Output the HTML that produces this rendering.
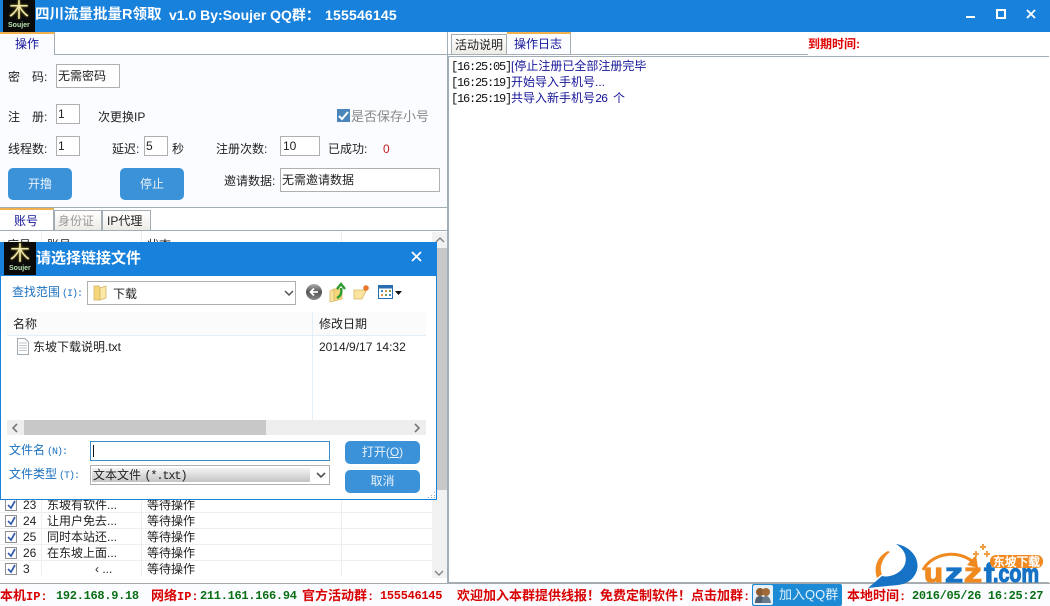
<!DOCTYPE html>
<html><head><meta charset="utf-8">
<style>
html,body{margin:0;padding:0;background:#fff}
#r{position:relative;width:1050px;height:606px;overflow:hidden;background:#fff;font:12px/14px "Liberation Sans","WenQuanYi Zen Hei","Noto Sans CJK SC",sans-serif;color:#222}
#r div,#r svg{position:absolute}
.t{white-space:nowrap}
.m{font-family:"Liberation Mono",monospace;font-size:12px;letter-spacing:-1.2px}
.l{font-family:"Liberation Mono",monospace;font-size:10px;letter-spacing:-1px;margin-left:2px}
.inp{box-sizing:border-box;background:#fff;border:1px solid #b0b0b0;padding:2px 1px;white-space:nowrap;line-height:14px}
.btn{background:#3c92d8;color:#e8f2fb;border-radius:5px;text-align:center;white-space:nowrap}
.cb{width:10px;height:10px;border:1px solid #8f8f8f;background:#fff;left:5px}
.ln{height:1px;background:#eee;left:0;width:432px}
.r{color:#d80000;font-weight:bold;white-space:nowrap;font-size:13px}
.r .q{font-family:"Liberation Mono",monospace;font-size:12px}
.g{color:#0a6e14;font-weight:bold;white-space:nowrap;font-family:"Liberation Mono",monospace;letter-spacing:-.3px}
.logo{color:#efe8b0;font-size:20px;line-height:22px;text-shadow:0 0 2px #c8b030}
.sj{font-size:7px;line-height:8px;color:#b8e0b0;font-weight:bold}
</style></head><body><div id="r">
<!-- title bar -->
<div style="left:0;top:0;width:1050px;height:32px;background:#1881dc"></div>
<div style="left:3px;top:0;width:32px;height:32px;background:#0a0a0a"></div>
<div class="t logo" style="left:9px;top:0">木</div>
<div class="t sj" style="left:8px;top:22px">Soujer</div>
<div class="t" style="left:35px;top:6px;color:#fff;font-size:14.5px;line-height:18px;font-weight:bold">四川流量批量R领取</div>
<div class="t" style="left:169px;top:6px;color:#fff;font-size:14px;line-height:18px;font-weight:bold">v1.0 By:Soujer QQ群：</div>
<div class="t" style="left:325px;top:6px;color:#fff;font-size:14px;line-height:18px;font-weight:bold;letter-spacing:.2px">155546145</div>
<div style="left:966px;top:16px;width:9px;height:2px;background:#fff"></div>
<div style="left:996px;top:9px;width:6px;height:6px;border:2px solid #fff"></div>
<svg style="left:1026px;top:9px" width="10" height="10"><path d="M1 1L9 9M9 1L1 9" stroke="#fff" stroke-width="1.8"/></svg>

<!-- left top panel -->
<div style="left:0;top:54px;width:448px;height:154px;background:#fbfcff;border-top:1px solid #a3adb5;border-right:1px solid #a3adb5;border-bottom:1px solid #a3adb5;box-sizing:border-box"></div>
<div style="left:0;top:32px;width:55px;height:23px;background:#fbfcff;border-right:1px solid #a3adb5;border-top:2px solid #f0b050;box-sizing:border-box"></div>
<div class="t" style="left:15px;top:37px;color:#16169a">操作</div>
<div class="t" style="left:8px;top:70px">密</div><div class="t" style="left:32px;top:70px">码:</div>
<div class="inp" style="left:56px;top:64px;width:64px;height:24px;padding-top:4px">无需密码</div>
<div class="t" style="left:8px;top:110px">注</div><div class="t" style="left:32px;top:110px">册:</div>
<div class="inp" style="left:56px;top:104px;width:24px;height:20px">1</div>
<div class="t" style="left:98px;top:110px">次更换IP</div>
<div style="left:337px;top:109px;width:13px;height:13px;background:#4a86bc"></div>
<svg style="left:337px;top:109px" width="13" height="13"><path d="M2 7L5 10L11 3" fill="none" stroke="#fff" stroke-width="2"/></svg>
<div class="t" style="left:351px;top:110px;color:#888;font-size:13px">是否保存小号</div>
<div class="t" style="left:8px;top:142px">线程数:</div>
<div class="inp" style="left:56px;top:136px;width:24px;height:20px">1</div>
<div class="t" style="left:112px;top:142px">延迟:</div>
<div class="inp" style="left:144px;top:136px;width:24px;height:20px">5</div>
<div class="t" style="left:172px;top:142px">秒</div>
<div class="t" style="left:216px;top:142px">注册次数:</div>
<div class="inp" style="left:280px;top:136px;width:40px;height:20px;padding-left:2px">10</div>
<div class="t" style="left:328px;top:142px">已成功:</div>
<div class="t" style="left:383px;top:142px;color:#c02020">0</div>
<div class="btn" style="left:8px;top:168px;width:64px;height:32px;line-height:32px">开撸</div>
<div class="btn" style="left:120px;top:168px;width:64px;height:32px;line-height:32px">停止</div>
<div class="t" style="left:224px;top:174px">邀请数据:</div>
<div class="inp" style="left:280px;top:168px;width:160px;height:24px;padding-top:4px">无需邀请数据</div>

<!-- left lower tabs -->
<div style="left:0;top:208px;width:54px;height:23px;background:#fff;border-top:2px solid #f0b050;border-right:1px solid #a3adb5;box-sizing:border-box"></div>
<div class="t" style="left:14px;top:214px;color:#16169a">账号</div>
<div style="left:54px;top:210px;width:46px;height:20px;background:linear-gradient(#fff,#eceae4);border:1px solid #a3adb5;border-bottom:0"></div>
<div class="t" style="left:58px;top:214px;color:#999">身份证</div>
<div style="left:102px;top:210px;width:47px;height:20px;background:linear-gradient(#fff,#eceae4);border:1px solid #a3adb5;border-bottom:0"></div>
<div class="t" style="left:107px;top:214px">IP代理</div>
<div style="left:0;top:230px;width:448px;height:1px;background:#a3adb5"></div>
<div style="left:447px;top:32px;width:1px;height:552px;background:#a3adb5"></div>

<!-- table -->
<div class="t" style="left:7px;top:238px">序号</div>
<div class="t" style="left:47px;top:238px">账号</div>
<div class="t" style="left:147px;top:238px">状态</div>
<div style="left:41px;top:231px;width:1px;height:345px;background:#eee"></div>
<div style="left:141px;top:231px;width:1px;height:345px;background:#eee"></div>
<div style="left:341px;top:231px;width:1px;height:345px;background:#eee"></div>
<div style="left:432px;top:232px;width:15px;height:346px;background:#f2f2f2"></div>
<div style="left:432px;top:248px;width:15px;height:242px;background:#c8c8c8"></div>
<svg style="left:435px;top:236px" width="10" height="8"><path d="M1 6L5 2L9 6" fill="none" stroke="#888" stroke-width="1.5"/></svg>
<div class="ln" style="top:512px"></div><div class="ln" style="top:528px"></div><div class="ln" style="top:544px"></div><div class="ln" style="top:560px"></div>
<div class="cb" style="top:499px"></div><div class="cb" style="top:515px"></div><div class="cb" style="top:531px"></div><div class="cb" style="top:547px"></div><div class="cb" style="top:563px"></div>
<svg style="left:5px;top:499px" width="13" height="80"><g fill="none" stroke="#3a5fb0" stroke-width="1.8"><path d="M3 6L6 9L10 2"/><path d="M3 22L6 25L10 18"/><path d="M3 38L6 41L10 34"/><path d="M3 54L6 57L10 50"/><path d="M3 70L6 73L10 66"/></g></svg>
<div class="t" style="left:23px;top:498px">23</div><div class="t" style="left:47px;top:498px">东坡有软件...</div><div class="t" style="left:147px;top:498px">等待操作</div>
<div class="t" style="left:23px;top:514px">24</div><div class="t" style="left:47px;top:514px">让用户免去...</div><div class="t" style="left:147px;top:514px">等待操作</div>
<div class="t" style="left:23px;top:530px">25</div><div class="t" style="left:47px;top:530px">同时本站还...</div><div class="t" style="left:147px;top:530px">等待操作</div>
<div class="t" style="left:23px;top:546px">26</div><div class="t" style="left:47px;top:546px">在东坡上面...</div><div class="t" style="left:147px;top:546px">等待操作</div>
<div class="t" style="left:23px;top:562px">3</div><div class="t" style="left:95px;top:562px">‹ ...</div><div class="t" style="left:147px;top:562px">等待操作</div>
<svg style="left:434px;top:570px" width="10" height="8"><path d="M1 1L5 5L9 1" fill="none" stroke="#888" stroke-width="1.5"/></svg>

<!-- right tabs -->
<div style="left:451px;top:34px;width:56px;height:21px;background:linear-gradient(#fff,#eceae4);border:1px solid #a3adb5;border-bottom:0;box-sizing:border-box"></div>
<div class="t" style="left:455px;top:38px">活动说明</div>
<div style="left:507px;top:32px;width:64px;height:23px;background:#fbfcff;border-top:2px solid #f0b050;border-right:1px solid #a3adb5;box-sizing:border-box"></div>
<div class="t" style="left:514px;top:37px;color:#16169a">操作日志</div>
<div style="left:448px;top:54px;width:360px;height:1px;background:#a3adb5"></div>
<div class="t" style="left:808px;top:37px;color:#e00000;font-weight:bold">到期时间:</div>
<div style="left:448px;top:56px;width:601px;height:527px;border:1px solid #a3adb5;border-right:0;box-sizing:border-box"></div>
<div class="t" style="left:451px;top:59px"><span class="m" style="color:#111">[16:25:05]</span><span style="color:#16169a">[停止注册已全部注册完毕</span></div>
<div class="t" style="left:451px;top:75px"><span class="m" style="color:#111">[16:25:19]</span><span style="color:#16169a">开始导入手机号...</span></div>
<div class="t" style="left:451px;top:91px"><span class="m" style="color:#111">[16:25:19]</span><span style="color:#16169a">共导入新手机号<span class="m">26 </span>个</span></div>

<!-- dialog -->
<div style="left:0;top:242px;width:437px;height:258px;background:#fff;border:1px solid #1881dc;box-sizing:border-box"></div>
<div style="left:0;top:242px;width:437px;height:34px;background:#1881dc"></div>
<div style="left:4px;top:242px;width:32px;height:33px;background:#0a0a0a"></div>
<div class="t logo" style="left:10px;top:243px">木</div>
<div class="t sj" style="left:9px;top:265px">Soujer</div>
<div class="t" style="left:36px;top:250px;color:#fff;font-size:15px;line-height:18px;font-weight:bold">请选择链接文件</div>
<svg style="left:411px;top:251px" width="11" height="11"><path d="M1 1L10 10M10 1L1 10" stroke="#fff" stroke-width="1.8"/></svg>
<div class="t" style="left:12px;top:285px;color:#1a70c0">查找范围<span class="l">(I):</span></div>
<div class="inp" style="left:87px;top:281px;width:209px;height:24px"></div>
<svg style="left:93px;top:284px" width="15" height="18"><path d="M1 2H6L7 4V16H1Z" fill="#f5d67a" stroke="#d0b060" stroke-width=".7"/><path d="M7 4L13 2V14L7 16Z" fill="#fbe9a8" stroke="#d0b060" stroke-width=".7"/></svg>
<div class="t" style="left:113px;top:287px">下载</div>
<svg style="left:284px;top:290px" width="10" height="7"><path d="M1 1L5 5L9 1" fill="none" stroke="#555" stroke-width="1.5"/></svg>
<svg style="left:304px;top:282px" width="100" height="22">
<defs><linearGradient id="bk" x1="0" y1="0" x2="0" y2="1"><stop offset="0" stop-color="#b0b0b0"/><stop offset=".5" stop-color="#555"/><stop offset="1" stop-color="#888"/></linearGradient></defs>
<circle cx="10" cy="10" r="8" fill="url(#bk)"/><path d="M14 10H7M10 6.500L6.500 10L10 13.500" fill="none" stroke="#fff" stroke-width="1.8"/>
<path d="M26 9L30 7V19L26 20Z" fill="#fbe3a0" stroke="#d8b860" stroke-width=".8"/><path d="M30 7H38V17L30 19Z" fill="#f5d67a" stroke="#d8b860" stroke-width=".8"/><path d="M33 16C37 14 38 10 37 6M33 7L37 2L41 7" fill="none" stroke="#2a9a30" stroke-width="2.400"/>
<path d="M50 8H60L62 9L58 17H50Z" fill="#fbe3a0" stroke="#d8b860" stroke-width=".8"/><circle cx="62" cy="6" r="2.800" fill="#e87830"/>
<rect x="74.500" y="3.500" width="14" height="13" fill="#fff" stroke="#2a6cb0"/><rect x="75" y="4" width="13" height="2.500" fill="#2a6cb0"/><path d="M77 8h2v2h-2z" fill="#4a8ad0"/><path d="M81 8h2v2h-2z" fill="#e09050"/><path d="M85 8h2v2h-2z" fill="#70a050"/><path d="M77 12h2v2h-2z" fill="#e09050"/><path d="M81 12h2v2h-2z" fill="#70a050"/><path d="M85 12h2v2h-2z" fill="#4a8ad0"/>
<path d="M91 9H98L94.500 13Z" fill="#111"/></svg>
<div style="left:7px;top:312px;width:419px;height:23px;background:#fbfbfb"></div>
<div style="left:7px;top:335px;width:419px;height:1px;background:#e4eef8"></div>
<div style="left:312px;top:312px;width:1px;height:108px;background:#e4eef8"></div>
<div class="t" style="left:13px;top:317px">名称</div>
<div class="t" style="left:319px;top:317px">修改日期</div>
<svg style="left:16px;top:338px" width="14" height="17"><path d="M1.500 .5H9L12.500 4V16.500H1.500Z" fill="#fff" stroke="#a0a8b0"/><path d="M3 5H11M3 7.500H11M3 10H11M3 12.500H11" stroke="#c0c4cc"/></svg>
<div class="t" style="left:33px;top:340px">东坡下载说明.txt</div>
<div class="t" style="left:319px;top:340px">2014/9/17 14:32</div>
<div style="left:7px;top:420px;width:419px;height:15px;background:#eee"></div>
<div style="left:24px;top:420px;width:242px;height:15px;background:#c8c8c8"></div>
<svg style="left:11px;top:423px" width="8" height="10"><path d="M6 1L2 5L6 9" fill="none" stroke="#777" stroke-width="1.6"/></svg>
<svg style="left:413px;top:423px" width="8" height="10"><path d="M2 1L6 5L2 9" fill="none" stroke="#777" stroke-width="1.6"/></svg>
<div class="t" style="left:9px;top:443px;color:#1a70c0">文件名<span class="l">(N):</span></div>
<div class="inp" style="left:90px;top:441px;width:240px;height:20px;border-color:#3c8cc8"></div>
<div style="left:93px;top:445px;width:1px;height:12px;background:#111"></div>
<div class="t" style="left:9px;top:467px;color:#1a70c0">文件类型<span class="l">(T):</span></div>
<div class="inp" style="left:90px;top:465px;width:240px;height:20px"></div>
<div style="left:92px;top:468px;width:218px;height:14px;background:linear-gradient(#f4f4f4,#c4c4c4)"></div>
<div class="t" style="left:93px;top:468px">文本文件 <span class="m" style="letter-spacing:-1.2px">(*.txt)</span></div>
<svg style="left:316px;top:472px" width="10" height="7"><path d="M1 1L5 5L9 1" fill="none" stroke="#555" stroke-width="1.6"/></svg>
<div class="btn" style="left:345px;top:441px;width:75px;height:23px;line-height:23px">打开(<u>O</u>)</div>
<div class="btn" style="left:345px;top:470px;width:75px;height:23px;line-height:23px">取消</div>
<svg style="left:428px;top:491px" width="8" height="8"><path d="M6 1h1v1h-1zM3 4h1v1h-1zM6 4h1v1h-1zM0 6h1v1h-1zM3 6h1v1h-1zM6 6h1v1h-1z" fill="#9ab"/></svg>

<!-- status bar -->
<div style="left:0;top:583px;width:1050px;height:23px;background:#fbfcff;border-top:1px solid #aaa;box-sizing:border-box"></div>
<div class="r" style="left:0;top:589px">本机<span class="q">IP:</span></div>
<div class="g" style="left:56px;top:589px">192.168.9.18</div>
<div class="r" style="left:151px;top:589px">网络<span class="q">IP:</span></div>
<div class="g" style="left:200px;top:589px">211.161.166.94</div>
<div class="r" style="left:302px;top:589px">官方活动群<span class="q">:</span></div>
<div class="r" style="left:380px;top:589px;font-family:'Liberation Mono',monospace;font-size:12px;letter-spacing:-.3px">155546145</div>
<div class="r" style="left:457px;top:589px">欢迎加入本群提供线报！免费定制软件！点击加群<span class="q">:</span></div>
<div style="left:752px;top:584px;width:90px;height:22px;background:#1d8ad6;border-radius:2px"></div>
<div style="left:753px;top:585px;width:20px;height:20px;background:#e8f0f8;border-radius:2px"></div>
<svg style="left:754px;top:586px" width="18" height="18"><circle cx="6" cy="6" r="4" fill="#8a5a30"/><circle cx="12" cy="6" r="4" fill="#a06a38"/><path d="M1 17Q1 10 6 10T11 17Z" fill="#506070"/><path d="M8 17Q8 10 12 10T17 17Z" fill="#6a7a88"/></svg>
<div class="t" style="left:779px;top:588px;color:#e4f2fc;font-size:13px">加入QQ群</div>
<div class="r" style="left:847px;top:589px">本地时间<span class="q">:</span></div>
<div class="g" style="left:912px;top:589px">2016/05/26 16:25:27</div>

<!-- watermark -->
<svg style="left:860px;top:540px" width="190" height="50">
<path d="M36 4C50 6 60 18 57 30C54 40 46 44 38 45L8 48L22 36C30 38 42 33 45 24C48 14 42 8 36 4Z" fill="#1672c4"/>
<path d="M28 11C18 16 13 26 17 38L22 34C19 28 22 18 30 12Z" fill="#f08a20"/>
<path d="M63 30C72 13 98 9 113 22" fill="none" stroke="#f08a20" stroke-width="3"/><path d="M107 25L118 28L116 15Z" fill="#f08a20"/>
<path d="M122 4h2v2h2v2h-2v2h-2v-2h-2v-2h2zM115 11h2v2h2v2h-2v2h-2v-2h-2v-2h2zM126 11h2v2h2v2h-2v2h-2v-2h-2v-2h2z" fill="#f0a040"/>
<g font-family="Liberation Sans" font-weight="bold" stroke-width="1.200">
<text x="64" y="42" font-size="27" fill="#f08a20" stroke="#f08a20" textLength="19" lengthAdjust="spacingAndGlyphs">u</text>
<text x="85" y="42" font-size="27" fill="#1672c4" stroke="#1672c4" textLength="18" lengthAdjust="spacingAndGlyphs">z</text>
<text x="104" y="42" font-size="27" fill="#f08a20" stroke="#f08a20" textLength="18" lengthAdjust="spacingAndGlyphs">z</text>
<text x="124" y="42" font-size="27" fill="#1672c4" stroke="#1672c4" textLength="10" lengthAdjust="spacingAndGlyphs">f</text>
<text x="133" y="42" font-size="25" fill="#1672c4" stroke="#1672c4" textLength="46" lengthAdjust="spacingAndGlyphs">.com</text>
</g>
<rect x="130" y="15" width="53" height="13" rx="6" fill="#f08a20"/>
<text x="133" y="26" font-size="12" font-weight="bold" fill="#fff" textLength="47" lengthAdjust="spacingAndGlyphs" font-family="WenQuanYi Zen Hei">东坡下载</text>
</svg>
</div></body></html>
